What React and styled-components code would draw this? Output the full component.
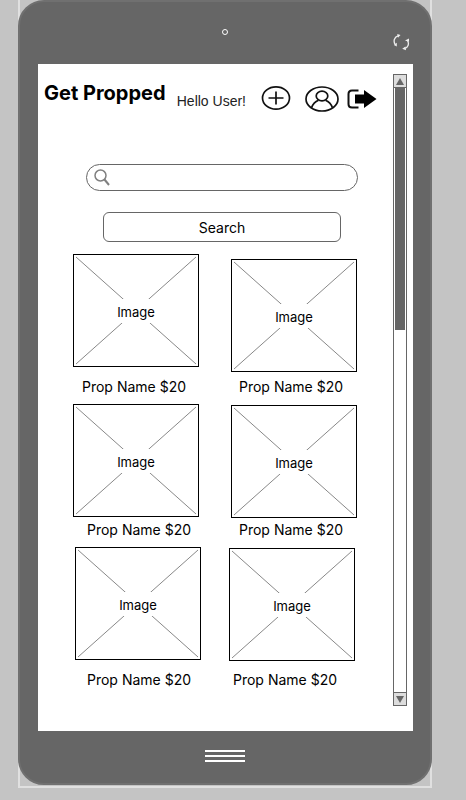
import React from "react";
import styled, { createGlobalStyle } from "styled-components";

const GlobalStyle = createGlobalStyle`
  * { box-sizing: border-box; }
  body {
    margin: 0;
    background: #c4c4c4;
    color: #000;
    font-family: Inter, "Liberation Sans", sans-serif;
  }
  button, input { font: inherit; color: inherit; }
`;

const Page = styled.div`
  display: flex;
  min-height: 100vh;
  padding: 0 34px 12px 18px;
`;

const Frame = styled.div`
  flex: 1;
  display: flex;
  border: solid #e0e0e0;
  border-width: 0 2px 2px;
  padding-bottom: 1px;
`;

const Device = styled.div`
  flex: 1;
  display: flex;
  flex-direction: column;
  margin: 0 -2px;
  padding: 0 17px 0 18px;
  border: 2px solid #707070;
  border-radius: 26px;
  background: #666;
`;

const TopBar = styled.div`
  display: grid;
  grid-template-columns: 1fr auto 1fr;
  align-items: center;
  height: 62px;
  padding-right: 1px;
`;

const Camera = styled.span`
  grid-column: 2;
  width: 6px;
  height: 6px;
  margin-bottom: 2px;
  border: 1px solid #fff;
  border-radius: 50%;
`;

const RotateButton = styled.button`
  justify-self: end;
  display: flex;
  margin: 18px 2px 0 0;
  padding: 0;
  border: 0;
  background: none;
`;

const BottomBar = styled.div`
  display: flex;
  justify-content: center;
  align-items: center;
  height: 52px;
  padding: 0 1px 2px 0;
`;

const HomeButton = styled.button`
  display: flex;
  flex-direction: column;
  gap: 3px;
  width: 40px;
  padding: 0;
  border: 0;
  background: none;
`;

const HomeLine = styled.span`
  height: 2px;
  background: #fff;
`;

const Screen = styled.div`
  flex: 1;
  display: flex;
  padding: 10px 6px 25px 0;
  background: #fff;
`;

const Content = styled.main`
  flex: 1;
  min-width: 0;
`;

const Header = styled.header`
  display: flex;
  align-items: center;
  height: 50px;
  padding: 0 16px 0 6px;
`;

const Title = styled.h1`
  flex: 1;
  margin: 0 0 12px;
  font-size: 20px;
  line-height: 24px;
  font-weight: 700;
  white-space: nowrap;
`;

const Greeting = styled.span`
  margin: 4px 15px 0 0;
  font-family: "Liberation Sans", Arial, sans-serif;
  font-size: 14px;
  line-height: 16px;
  color: #222;
  white-space: nowrap;
`;

const IconButton = styled.button`
  display: flex;
  margin-left: ${(p) => p.$gap}px;
  padding: 0;
  border: 0;
  background: none;
`;

const SearchForm = styled.form`
  display: flex;
  flex-direction: column;
  gap: 21px;
  margin: 40px 35px 12px 48px;
`;

const SearchField = styled.label`
  display: flex;
  align-items: center;
  gap: 6px;
  height: 27px;
  padding: 0 12px 0 7px;
  border: 1px solid #666;
  border-radius: 14px;
`;

const SearchInput = styled.input`
  flex: 1;
  min-width: 0;
  padding: 0;
  border: 0;
  outline: 0;
  background: none;
  font-size: 14px;
`;

const SearchButton = styled.button`
  height: 30px;
  margin: 0 17px;
  padding: 0;
  border: 1px solid #666;
  border-radius: 6px;
  background: #fff;
  font-size: 14px;
`;

const Props = styled.section`
  display: flex;
  flex-direction: column;
  gap: 9px;
  padding: 0 36px 0 35px;
`;

const PropRow = styled.div`
  display: flex;
  justify-content: center;
  align-items: flex-end;
  gap: ${(p) => p.$gap}px;
`;

const PropCard = styled.figure`
  width: 126px;
  margin: 0;
`;

const Picture = styled.div`
  display: grid;
  height: 113px;
  border: 1px solid #000;
  > * { grid-area: 1 / 1; }
`;

const PictureLabel = styled.span`
  place-self: center;
  padding: 5px 8px 3px;
  background: #fff;
  font-size: 13px;
  line-height: 16px;
`;

const Caption = styled.figcaption`
  padding: ${(p) => p.$space}px 0 0 ${(p) => p.$indent}px;
  font-size: 14px;
  line-height: 16px;
  white-space: nowrap;
`;

const ScrollBar = styled.div`
  display: flex;
  flex-direction: column;
  width: 14px;
  border: 1px solid #666;
`;

const ScrollButton = styled.button`
  display: flex;
  justify-content: center;
  align-items: center;
  height: 13px;
  padding: 0;
  border: solid #666;
  border-width: ${(p) => (p.$down ? "1px 0 0" : "0 0 1px")};
  background: #ddd;
`;

const Track = styled.div`
  flex: 1;
  padding: 0 1px;
`;

const Thumb = styled.div`
  height: 40%;
  background: #666;
`;

const rows = [
  { gap: 32, items: [{ space: 12, indent: 9 }, { space: 7, indent: 8 }] },
  { gap: 32, items: [{ space: 5, indent: 14 }, { space: 4, indent: 8 }] },
  { gap: 28, items: [{ space: 12, indent: 12 }, { space: 11, indent: 4 }] },
];

function RotateIcon() {
  return (
    <svg width="17" height="17" viewBox="0 0 17 17">
      <path
        d="M5 1.8C1 3 .2 7.500 2.200 10.500M14.500 6.500C16.500 10 15 13.500 11.500 14.500"
        fill="none"
        stroke="#eee"
        strokeWidth="1.3"
      />
      <path d="M4.200 0l3.300 1L5 3.800zM.8 11l3-2.200v3.600zM12 6.500l4-2v3.300zM12.500 12.500l-3.300 2.200 3.800 1.600z" fill="#eee" />
    </svg>
  );
}

function PlusIcon() {
  return (
    <svg width="30" height="28" viewBox="0 0 30 28" fill="none" stroke="#111" strokeWidth="1.7">
      <ellipse cx="15" cy="13" rx="13.5" ry="11.2" />
      <path d="M15 6.5v13M7.5 13h15" />
    </svg>
  );
}

function UserIcon() {
  return (
    <svg width="34" height="28" viewBox="0 0 34 28" fill="none" stroke="#111" strokeWidth="1.7">
      <ellipse cx="17" cy="14" rx="16" ry="12" />
      <ellipse cx="17" cy="11" rx="5.8" ry="4.8" />
      <path d="M6.5 22.8C8 18.5 10.5 16.5 13.5 15.3M20.5 15.3c3 1.2 5.5 3.2 7 7.5" />
    </svg>
  );
}

function LogoutIcon() {
  return (
    <svg width="30" height="22" viewBox="0 0 30 22">
      <path d="M11.5 2.500H5Q1.500 2.500 1.500 6v10Q1.500 19.500 5 19.500h6.500" fill="none" stroke="#111" strokeWidth="2" />
      <path d="M8 6.500h9V2L29.500 11 17 20V15.500H8z" fill="#000" />
    </svg>
  );
}

function SearchIcon() {
  return (
    <svg width="17" height="18" viewBox="0 0 17 18" fill="none" stroke="#808080">
      <circle cx="6.5" cy="6.5" r="5.5" strokeWidth="1.5" />
      <path d="M10.5 10.5l4.5 5.5" strokeWidth="2" />
    </svg>
  );
}

function Cross() {
  return (
    <svg width="100%" height="100%" viewBox="0 0 124 111" preserveAspectRatio="none" stroke="#888">
      <path d="M2 2l120 107M122 2L2 109" />
    </svg>
  );
}

function PropItem({ space, indent }) {
  return (
    <PropCard>
      <Picture>
        <Cross />
        <PictureLabel>Image</PictureLabel>
      </Picture>
      <Caption $space={space} $indent={indent}>Prop Name $20</Caption>
    </PropCard>
  );
}

export default function App() {
  return (
    <Page>
      <GlobalStyle />
      <Frame>
        <Device>
          <TopBar>
            <Camera />
            <RotateButton aria-label="Rotate"><RotateIcon /></RotateButton>
          </TopBar>
          <Screen>
            <Content>
              <Header>
                <Title>Get Propped</Title>
                <Greeting>Hello User!</Greeting>
                <IconButton $gap={0} aria-label="Add prop"><PlusIcon /></IconButton>
                <IconButton $gap={14} aria-label="Profile"><UserIcon /></IconButton>
                <IconButton $gap={8} aria-label="Log out"><LogoutIcon /></IconButton>
              </Header>
              <SearchForm onSubmit={(e) => e.preventDefault()}>
                <SearchField>
                  <SearchIcon />
                  <SearchInput type="text" aria-label="Search props" />
                </SearchField>
                <SearchButton type="submit">Search</SearchButton>
              </SearchForm>
              <Props>
                {rows.map((row, r) => (
                  <PropRow key={r} $gap={row.gap}>
                    {row.items.map((item, i) => <PropItem key={i} {...item} />)}
                  </PropRow>
                ))}
              </Props>
            </Content>
            <ScrollBar>
              <ScrollButton aria-label="Scroll up">
                <svg width="8" height="7" viewBox="0 0 8 7"><path d="M4 0l4 7H0z" fill="#666" /></svg>
              </ScrollButton>
              <Track><Thumb /></Track>
              <ScrollButton $down aria-label="Scroll down">
                <svg width="8" height="7" viewBox="0 0 8 7"><path d="M0 0h8L4 7z" fill="#666" /></svg>
              </ScrollButton>
            </ScrollBar>
          </Screen>
          <BottomBar>
            <HomeButton aria-label="Home"><HomeLine /><HomeLine /><HomeLine /></HomeButton>
          </BottomBar>
        </Device>
      </Frame>
    </Page>
  );
}
